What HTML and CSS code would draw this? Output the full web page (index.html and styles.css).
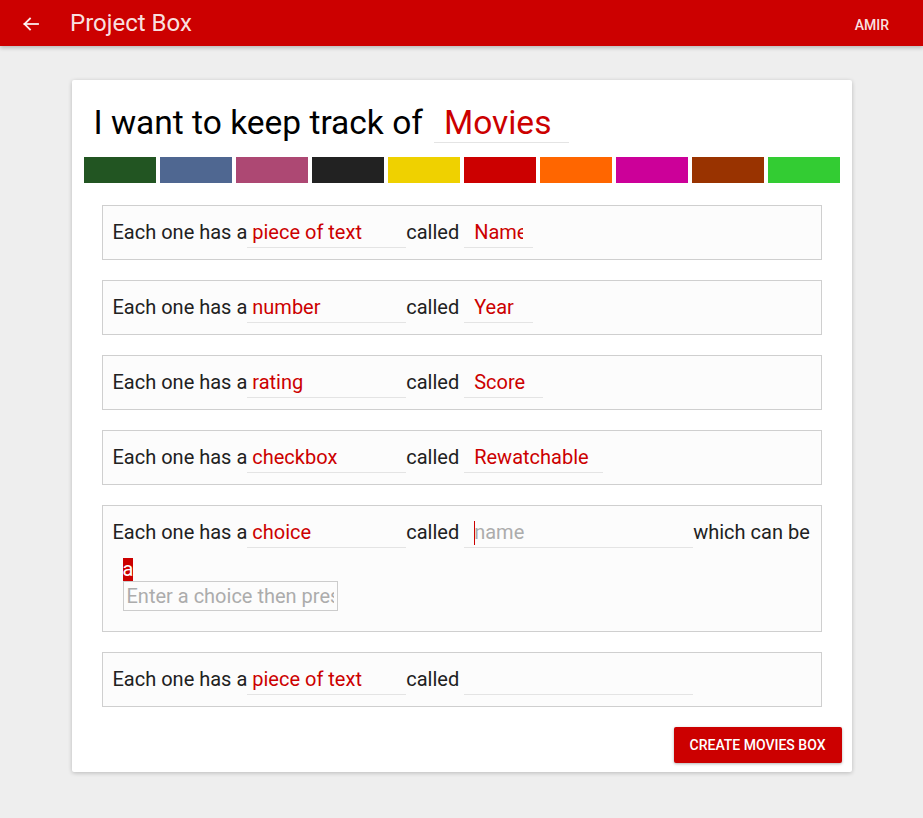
FILE: index.html
```html
<!DOCTYPE html>
<html lang="en">
<head>
<meta charset="utf-8">
<title>Project Box</title>
<link rel="stylesheet" href="styles.css">
</head>
<body>
<header class="appbar">
  <button class="back" aria-label="Back">
    <svg width="16" height="14" viewBox="0 0 16 14" fill="none" stroke="currentColor" stroke-width="1.8" stroke-linecap="square">
      <path d="M1.5 7H15"/>
      <path d="M7 1.5L1.5 7L7 12.5"/>
    </svg>
  </button>
  <h1 class="appbar-title">Project Box</h1>
  <span class="user">AMIR</span>
</header>

<main class="page">
  <section class="card">
    <div class="title-row">
      <span class="title-text">I want to keep track of</span>
      <input class="title-input" type="text" value="Movies">
    </div>

    <div class="swatches">
      <span class="swatch c1"></span>
      <span class="swatch c2"></span>
      <span class="swatch c3"></span>
      <span class="swatch c4"></span>
      <span class="swatch c5"></span>
      <span class="swatch c6"></span>
      <span class="swatch c7"></span>
      <span class="swatch c8"></span>
      <span class="swatch c9"></span>
      <span class="swatch c10"></span>
    </div>

    <div class="fields">
      <div class="field">
        <span class="label">Each one has a</span>
        <input class="type-input" type="text" value="piece of text">
        <span class="label">called&nbsp;</span>
        <input class="name-input" type="text" value="Name" style="width:69px">
      </div>
      <div class="field">
        <span class="label">Each one has a</span>
        <input class="type-input" type="text" value="number">
        <span class="label">called&nbsp;</span>
        <input class="name-input" type="text" value="Year" style="width:69px">
      </div>
      <div class="field">
        <span class="label">Each one has a</span>
        <input class="type-input" type="text" value="rating">
        <span class="label">called&nbsp;</span>
        <input class="name-input" type="text" value="Score" style="width:79px">
      </div>
      <div class="field">
        <span class="label">Each one has a</span>
        <input class="type-input" type="text" value="checkbox">
        <span class="label">called&nbsp;</span>
        <input class="name-input" type="text" value="Rewatchable" style="width:139px">
      </div>
      <div class="field">
        <span class="label">Each one has a</span>
        <input class="type-input" type="text" value="choice">
        <span class="label">called&nbsp;</span>
        <span class="caret-wrap">
          <input class="name-input" type="text" placeholder="name" style="width:229px">
        </span>
        <span class="label">which can be</span>
        <div class="choices">
          <span class="chip">a</span>
          <input class="choice-input" type="text" placeholder="Enter a choice then press enter">
        </div>
      </div>
      <div class="field">
        <span class="label">Each one has a</span>
        <input class="type-input" type="text" value="piece of text">
        <span class="label">called&nbsp;</span>
        <input class="name-input" type="text" value="" style="width:229px">
      </div>
    </div>

    <div class="actions">
      <button class="create">Create Movies Box</button>
    </div>
  </section>
</main>
</body>
</html>
```

FILE: styles.css
```css
* { box-sizing: border-box; }

html, body {
  margin: 0;
  padding: 0;
}

body {
  background: #eeeeee;
  font-family: Roboto, "Noto Sans", "Liberation Sans", sans-serif;
  color: #212121;
  min-height: 818px;
}

/* App bar */
.appbar {
  height: 46px;
  background: #cc0000;
  color: rgba(255, 255, 255, 0.9);
  display: flex;
  align-items: center;
  padding: 0 34px 0 23px;
  box-shadow: 0 2px 4px rgba(0, 0, 0, 0.22);
  position: relative;
  z-index: 1;
}

.back {
  background: none;
  border: 0;
  padding: 0;
  margin: 0;
  width: 16px;
  height: 14px;
  color: rgba(255, 255, 255, 0.92);
  display: flex;
  cursor: pointer;
  margin-top: 1px;
}

.appbar-title {
  margin: 0 0 0 31px;
  font-size: 24px;
  font-weight: 400;
  line-height: 1;
  flex: 1;
  color: rgba(255, 255, 255, 0.9);
}

.user {
  font-size: 14px;
  font-weight: 500;
  margin-top: 3px;
}

/* Page */
.page {
  padding-top: 34px;
}

.card {
  width: 780px;
  margin: 0 auto;
  background: #ffffff;
  padding: 12px 12px 9px;
  box-shadow: 0 1px 4px rgba(0, 0, 0, 0.22);
  border-radius: 2px;
}

.title-row {
  display: flex;
  align-items: baseline;
  height: 40px;
  margin-top: 11px;
  padding-left: 10px;
}

.title-text {
  font-size: 33.5px;
  line-height: 1;
  color: #000;
}

.title-input {
  margin-left: 11px;
  width: 135px;
  height: 40px;
  font-family: inherit;
  font-size: 33.5px;
  color: #cc0000;
  border: 0;
  border-bottom: 1px solid #e4e4e4;
  padding: 0 10px;
  background: transparent;
  outline: none;
}

.swatches {
  display: flex;
  gap: 4px;
  margin-top: 14px;
}

.swatch {
  width: 72px;
  height: 26px;
  display: block;
}
.c1 { background: #225522; }
.c2 { background: #4f6791; }
.c3 { background: #ad4873; }
.c4 { background: #222222; }
.c5 { background: #efd100; }
.c6 { background: #cc0000; }
.c7 { background: #ff6600; }
.c8 { background: #cc0099; }
.c9 { background: #993300; }
.c10 { background: #33cc33; }

/* Fields */
.fields {
  margin: 22px 18px 0;
  display: flex;
  flex-direction: column;
  gap: 20px;
}

.field {
  border: 1px solid #cfcfcf;
  background: #fcfcfc;
  padding: 9px 10px 11px;
  display: flex;
  flex-wrap: wrap;
  align-items: baseline;
  font-size: 20px;
}

.label {
  color: #212121;
  font-size: 20px;
  line-height: 1;
  white-space: nowrap;
}

.type-input,
.name-input {
  font-family: inherit;
  font-size: 20px;
  color: #cc0000;
  height: 33px;
  border: 0;
  border-bottom: 1px solid #e4e4e4;
  background: transparent;
  padding: 2px 10px 0;
  outline: none;
}

.type-input {
  width: 159px;
  padding-left: 5px;
}

.name-input::placeholder,
.choice-input::placeholder {
  color: #acacac;
  opacity: 1;
}

.caret-wrap {
  position: relative;
  display: inline-flex;
}

.caret-wrap::before {
  content: "";
  position: absolute;
  left: 10px;
  top: 6px;
  width: 1px;
  height: 24px;
  background: #cc0000;
}

.choices {
  flex-basis: 100%;
  margin: 10px 0 9px 10px;
}

.chip {
  display: block;
  width: max-content;
  background: #cc0000;
  color: #fff;
  font-size: 20px;
  line-height: 23px;
  padding: 0;
}

.choice-input {
  display: block;
  width: 215px;
  height: 30px;
  border: 1px solid #cccccc;
  font-family: inherit;
  font-size: 20px;
  padding: 0 3px;
  background: transparent;
  outline: none;
  color: #212121;
}

.actions {
  display: flex;
  justify-content: flex-end;
  margin: 20px -2px 0 0;
}

.create {
  height: 36px;
  padding: 0 16px;
  background: #cc0000;
  color: #fff;
  border: 0;
  border-radius: 2px;
  font-family: inherit;
  font-size: 14px;
  font-weight: 500;
  text-transform: uppercase;
  box-shadow: 0 1px 3px rgba(0, 0, 0, 0.3);
  cursor: pointer;
}
```
